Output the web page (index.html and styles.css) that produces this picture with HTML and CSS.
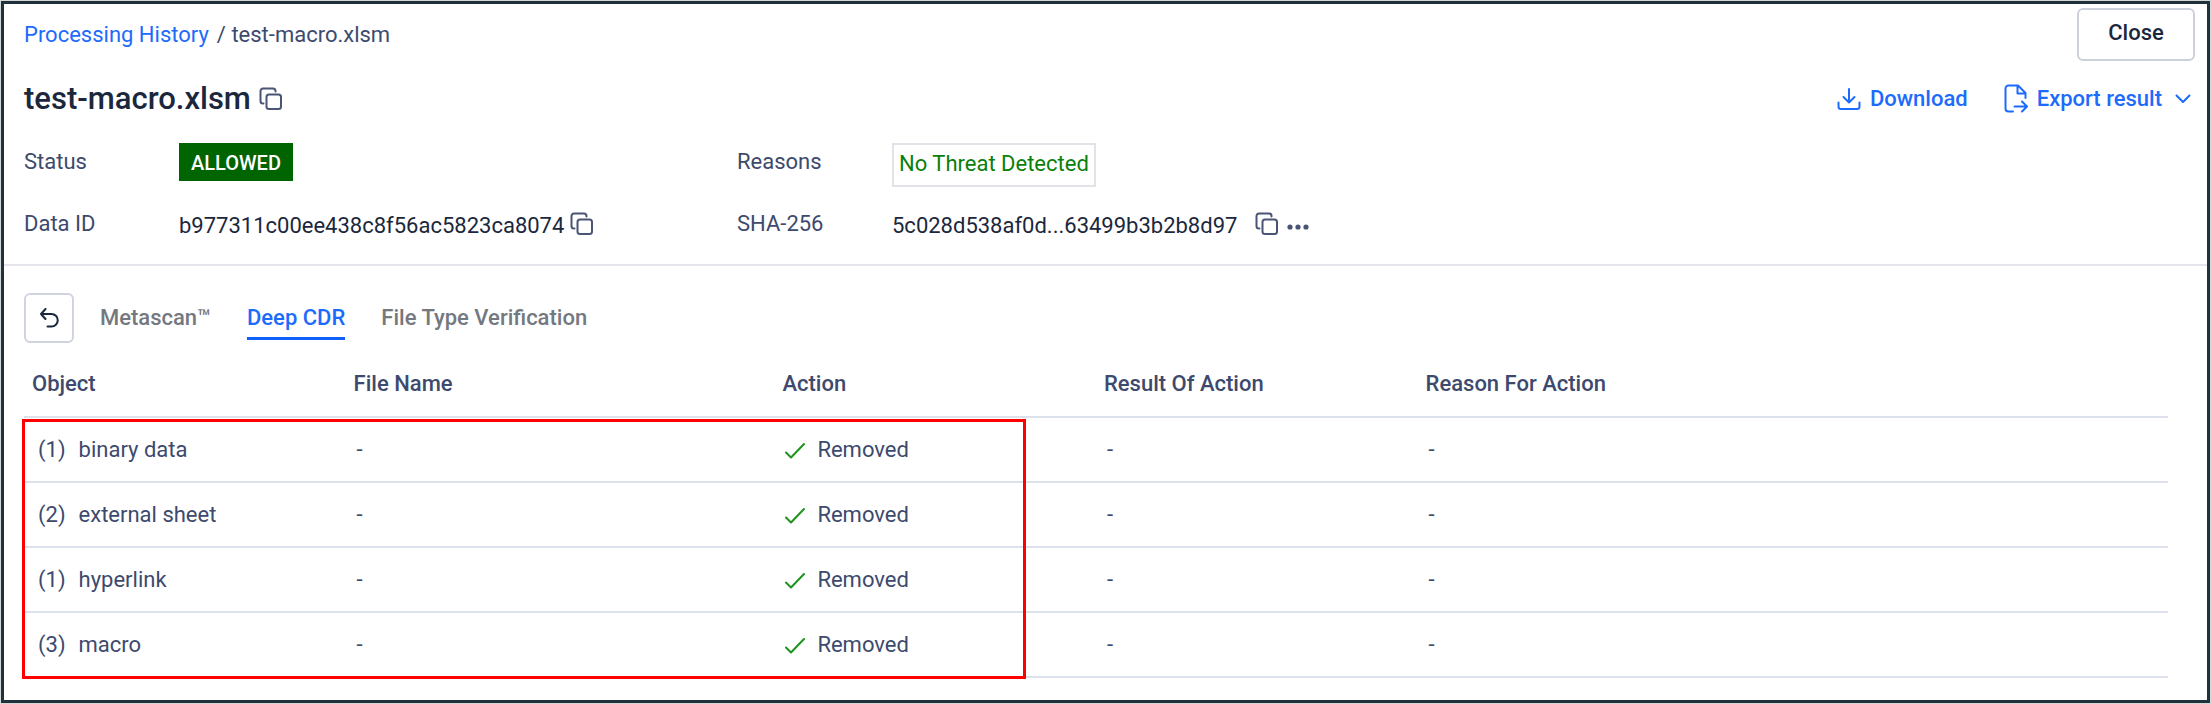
FILE: index.html
```html
<!DOCTYPE html>
<html lang="en">
<head>
  <meta charset="UTF-8" />
  <meta name="viewport" content="width=device-width, initial-scale=1.0"/>
  <title>test-macro.xlsm – Processing History</title>
  <link rel="stylesheet" href="styles.css">
</head>
<body>
  <svg class="defs" width="0" height="0" aria-hidden="true">
    <symbol id="copy" viewBox="0 0 24 24">
      <rect x="7.500" y="7.500" width="14.500" height="14.500" rx="2.500"/>
      <path d="M4.500 16.500H4a2.500 2.500 0 0 1-2.500-2.500V4A2.500 2.500 0 0 1 4 1.500h10A2.500 2.500 0 0 1 16.500 4v.5"/>
    </symbol>
    <symbol id="check" viewBox="0 0 20 18">
      <path d="M1 11.500l5 5L19 3"/>
    </symbol>
  </svg>

  <div class="page">
    <header>
      <div class="top-row">
        <nav class="breadcrumb">
          <a href="#">Processing History</a>
          <span>/ test-macro.xlsm</span>
        </nav>
        <button class="close-btn">Close</button>
      </div>

      <div class="title-row">
        <h1>test-macro.xlsm</h1>
        <button class="icon-btn" aria-label="Copy file name"><svg class="copy-icon"><use href="#copy"/></svg></button>
        <div class="actions">
          <a href="#" class="action">
            <svg class="download-icon" viewBox="0 0 24 24"><path d="M12 2v13M6.500 10l5.500 5.500 5.500-5.500M1.500 15.500v4a2.500 2.500 0 0 0 2.500 2.500h16a2.500 2.500 0 0 0 2.500-2.500v-4"/></svg>
            Download
          </a>
          <button class="action">
            <svg class="export-icon" viewBox="0 0 24 30"><path d="M9 27.500H4.500a3 3 0 0 1-3-3v-20a3 3 0 0 1 3-3H14l7.500 7.500v5M13.500 2v7.500h7.500M10.500 22.500h12M18 17.500l5 5-5 5"/></svg>
            Export result
            <svg class="chevron" viewBox="0 0 16 10"><path d="M1.500 1.500L8 8l6.500-6.500"/></svg>
          </button>
        </div>
      </div>

      <div class="details">
        <span class="label">Status</span>
        <span class="value"><b class="status">ALLOWED</b></span>
        <span class="label">Reasons</span>
        <span class="value"><span class="reason">No Threat Detected</span></span>

        <span class="label">Data ID</span>
        <span class="value">b977311c00ee438c8f56ac5823ca8074
          <button class="icon-btn" aria-label="Copy data ID"><svg class="copy-icon"><use href="#copy"/></svg></button>
        </span>
        <span class="label">SHA-256</span>
        <span class="value hash"><span>5c028d538af0d...63499b3b2b8d97</span>
          <button class="icon-btn" aria-label="Copy SHA-256"><svg class="copy-icon"><use href="#copy"/></svg></button>
          <button class="icon-btn" aria-label="More hashes"><svg class="dots" viewBox="0 0 22 6"><circle cx="3" cy="3" r="2.600"/><circle cx="11" cy="3" r="2.600"/><circle cx="19" cy="3" r="2.600"/></svg></button>
        </span>
      </div>
    </header>

    <main>
      <div class="tabs">
        <button class="back-btn" aria-label="Back"><svg viewBox="0 0 20 20"><path d="M6.500 1L2 6l4.500 5M2 6h10.500a6 6 0 0 1 0 12.500H8.500"/></svg></button>
        <a href="#" class="tab">Metascan™</a>
        <a href="#" class="tab active">Deep CDR</a>
        <a href="#" class="tab">File Type Verification</a>
      </div>

      <div class="table-wrap">
        <table>
          <thead>
            <tr>
              <th class="w15">Object</th>
              <th class="w20">File Name</th>
              <th class="w15">Action</th>
              <th class="w15">Result Of Action</th>
              <th>Reason For Action</th>
            </tr>
          </thead>
          <tbody>
            <tr>
              <td><span class="object"><span>(1)</span><span>binary data</span></span></td>
              <td>-</td>
              <td><span class="removed"><svg><use href="#check"/></svg>Removed</span></td>
              <td>-</td>
              <td>-</td>
            </tr>
            <tr>
              <td><span class="object"><span>(2)</span><span>external sheet</span></span></td>
              <td>-</td>
              <td><span class="removed"><svg><use href="#check"/></svg>Removed</span></td>
              <td>-</td>
              <td>-</td>
            </tr>
            <tr>
              <td><span class="object"><span>(1)</span><span>hyperlink</span></span></td>
              <td>-</td>
              <td><span class="removed"><svg><use href="#check"/></svg>Removed</span></td>
              <td>-</td>
              <td>-</td>
            </tr>
            <tr>
              <td><span class="object"><span>(3)</span><span>macro</span></span></td>
              <td>-</td>
              <td><span class="removed"><svg><use href="#check"/></svg>Removed</span></td>
              <td>-</td>
              <td>-</td>
            </tr>
          </tbody>
        </table>
        <div class="highlight"></div>
      </div>
    </main>
  </div>
</body>
</html>
```
FILE: styles.css
```css
* {
  box-sizing: border-box;
}
body {
  margin: 0;
  padding: 1px;
  background: #d3d9db;
  color: #3d4a6d;
  font-family: Roboto, sans-serif;
  font-size: 22px;
  line-height: 28px;
}
a {
  color: #1d6bfc;
  text-decoration: none;
}
button {
  font: inherit;
  cursor: pointer;
}
svg {
  display: block;
  fill: none;
  stroke: currentColor;
  stroke-width: 2;
  stroke-linecap: round;
  stroke-linejoin: round;
}
.defs {
  position: absolute;
}
.page {
  min-height: calc(100vh - 2px);
  border: 3px solid #22303a;
  background: #fff;
}
header {
  padding: 4px 12px 4px 20px;
  border-bottom: 2px solid #e4e4ea;
}
.top-row {
  display: flex;
  justify-content: space-between;
}
.breadcrumb {
  display: flex;
  gap: 8px;
  padding-top: 13px;
}
.close-btn {
  width: 118px;
  height: 53px;
  padding: 0 0 4px;
  border: 2px solid #cbd0da;
  border-radius: 6px;
  background: #fff;
  color: #1b273c;
  font-weight: 500;
}
.title-row {
  display: flex;
  align-items: center;
  gap: 8px;
  height: 75px;
}
h1 {
  margin: 0;
  color: #1b273c;
  font-size: 31px;
  font-weight: 500;
}
.icon-btn {
  padding: 0;
  border: none;
  background: none;
  color: #4a5474;
}
.copy-icon {
  width: 24px;
  height: 24px;
}
.actions {
  display: flex;
  gap: 36px;
  margin-left: auto;
}
.action {
  display: flex;
  align-items: center;
  gap: 9px;
  padding: 0;
  border: none;
  background: none;
  color: #1d6bfc;
  font-weight: 500;
}
.download-icon {
  width: 24px;
  height: 24px;
}
.export-icon {
  width: 24px;
  height: 30px;
}
.chevron {
  width: 16px;
  height: 10px;
  margin: 0 4px;
}
.details {
  display: grid;
  grid-template-columns: 155px 558px 155px 1fr;
  grid-template-rows: 62px 62px;
}
.label {
  padding-top: 12px;
}
.value {
  display: flex;
  align-items: flex-start;
  gap: 6px;
  padding-top: 14px;
  color: #1b273c;
}
.value:has(.status),
.value:has(.reason) {
  padding-top: 7px;
}
.hash {
  gap: 8px;
}
.hash span {
  margin-right: 10px;
}
.hash .icon-btn:last-child {
  padding-top: 12px;
}
.dots {
  width: 22px;
  height: 6px;
  fill: currentColor;
  stroke: none;
}
.status {
  height: 38px;
  padding: 0 12px;
  background: #006400;
  color: #fff;
  font-size: 20px;
  font-weight: 500;
  line-height: 40px;
}
.reason {
  padding: 5px 5px 7px;
  border: 2px solid #e2e2e8;
  color: #0a800a;
}
main {
  padding: 27px 39px 19px 20px;
}
.tabs {
  display: flex;
  align-items: flex-start;
  gap: 36px;
}
.back-btn {
  display: grid;
  place-items: center;
  width: 50px;
  height: 50px;
  margin-right: -10px;
  padding: 0;
  border: 2px solid #d0d4de;
  border-radius: 6px;
  background: #fff;
  color: #1b273c;
}
.back-btn svg {
  width: 20px;
  height: 20px;
}
.tab {
  padding: 11px 0 5px;
  border-bottom: 3px solid transparent;
  color: #74787f;
  font-weight: 500;
}
.tab.active {
  border-color: #1160fb;
  color: #1d6bfc;
}
.table-wrap {
  position: relative;
  padding-top: 9px;
}
table {
  width: 100%;
  border-collapse: collapse;
  table-layout: fixed;
}
th, td {
  height: 65px;
  padding: 0 8px;
  border-bottom: 2px solid #dce1ec;
  text-align: left;
}
th {
  font-weight: 500;
}
td {
  padding: 0 11px;
}
.w15 {
  width: 15%;
}
.w20 {
  width: 20%;
}
.object {
  display: flex;
  gap: 13px;
  padding-left: 3px;
}
.removed {
  display: flex;
  align-items: center;
  gap: 12px;
}
.removed svg {
  width: 20px;
  height: 18px;
  color: #1d941d;
}
/* red frame round the first three columns of the body */
.highlight {
  position: absolute;
  top: 76px;
  bottom: -1px;
  left: -2px;
  width: calc(47% - 4px);
  border: 3px solid #f00;
}
```
